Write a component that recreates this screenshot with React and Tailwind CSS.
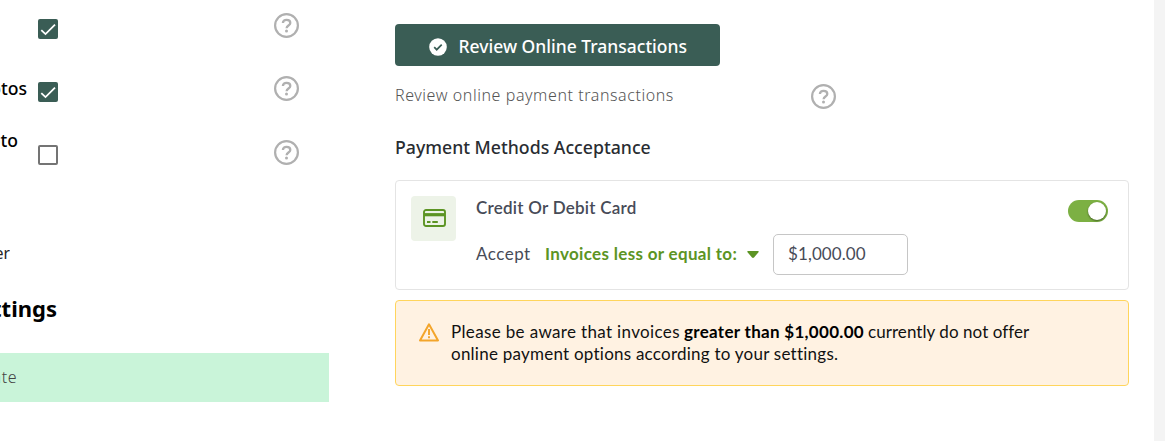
import React from "react";

function HelpIcon() {
  return (
    <svg className="block h-[25px] w-[25px] shrink-0" viewBox="0 0 25 25" fill="none" stroke="#b0b0b0">
      <circle cx="12.5" cy="12.5" r="11.4" strokeWidth="2.2" />
      <path d="M8.9 10C8.9 7.9 10.4 6.9 12.5 6.9s3.8 1.1 3.8 3c0 2.6-3.7 2.6-3.7 5.3" strokeWidth="2.3" />
      <circle cx="12.5" cy="18" r="1.5" fill="#b0b0b0" stroke="none" />
    </svg>
  );
}

function Checkbox({ checked }) {
  return checked ? (
    <div className="h-5 w-5 shrink-0 rounded-[2px] bg-[#3a5d55]">
      <svg className="block h-5 w-5" viewBox="0 0 20 20" fill="none" stroke="white" strokeWidth="1.8">
        <path d="M3.3 11.1 7.5 15.1 17 5.6" />
      </svg>
    </div>
  ) : (
    <div className="h-5 w-5 shrink-0 rounded-[2px] border-2 border-[#747474] bg-white" />
  );
}

function ClippedLabel({ children, className }) {
  return <div className={`flex justify-end overflow-hidden whitespace-nowrap ${className}`}>{children}</div>;
}

function SettingsColumn() {
  return (
    <section className="flex w-[329px] shrink-0 flex-col text-black">
      <div className="flex h-[64px] items-start pr-[30px]">
        <div className="w-[38px] shrink-0" />
        <div className="pt-[19px]"><Checkbox checked /></div>
        <div className="ml-auto pt-[13px]"><HelpIcon /></div>
      </div>
      <div className="flex h-[63px] items-start pr-[30px]">
        <ClippedLabel className="mr-[11px] mt-3 w-[27px] text-[17.6px] leading-6 font-medium">otos</ClippedLabel>
        <div className="pt-[18px]"><Checkbox checked /></div>
        <div className="ml-auto pt-[12px]"><HelpIcon /></div>
      </div>
      <div className="flex h-[64px] items-start pr-[30px]">
        <ClippedLabel className="mr-5 mt-px w-[18px] text-[17.6px] leading-6 font-medium">oto</ClippedLabel>
        <div className="pt-[18px]"><Checkbox /></div>
        <div className="ml-auto pt-[13px]"><HelpIcon /></div>
      </div>
      <ClippedLabel className="mt-[50px] w-[10px] text-[15.5px] leading-6 text-[#222]">er</ClippedLabel>
      <ClippedLabel className="mt-[27px] w-[57px] text-[22px] leading-8 font-bold">ettings</ClippedLabel>
      <div className="mt-[29px] flex h-[49px] items-center bg-[#c9f4d9] pb-[2px]">
        <ClippedLabel className="w-[17px] text-[16px] leading-6 font-light tracking-[0.54px] text-[#444]">ate</ClippedLabel>
      </div>
    </section>
  );
}

function CardPaymentMethod() {
  return (
    <div className="flex h-[110px] rounded border border-[#e4e4e4] bg-white pl-[15px] pr-5 pt-[15px] font-['Lato',sans-serif] text-[#474b57]">
      <div className="flex h-[45px] w-[45px] shrink-0 items-center justify-center rounded-[4px] bg-[#edf3e8]">
        <svg className="mb-px ml-px block h-[18px] w-[23px]" viewBox="0 0 23 18" fill="none" stroke="#5c9424">
          <rect x="1" y="1" width="21" height="16" rx="2" strokeWidth="1.9" />
          <path d="M1 5.7h21" strokeWidth="3.2" />
          <path d="M4 13h3.5M9.3 13h5.5" strokeWidth="1.8" />
        </svg>
      </div>
      <div className="ml-5 flex flex-col whitespace-nowrap text-[17px]">
        <div className="leading-6 font-semibold tracking-[0.25px]">Credit Or Debit Card</div>
        <div className="mt-[14px] flex h-[41px] items-center">
          <span className="w-[69px] pb-[2px] leading-6 tracking-[0.5px]">Accept</span>
          <span className="w-[202px] pb-[2px] leading-6 font-bold tracking-[0.32px] text-[#5c9424]">Invoices less or equal to:</span>
          <svg className="block h-[7px] w-[12px]" viewBox="0 0 12 7" fill="#5c9424">
            <path d="M1 0h10c.8 0 1 .7.5 1.2L7 6.5c-.6.6-1.4.6-2 0L.5 1.2C0 .7.2 0 1 0Z" />
          </svg>
          <div className="ml-[14px] flex h-[41px] w-[135px] items-center rounded-[5px] border border-[#c6c6c6] bg-white pb-px pl-[14px] tracking-[0.1px]">
            $1,000.00
          </div>
        </div>
      </div>
      <div className="ml-auto mt-1 flex h-[22px] w-10 items-center justify-end rounded-full bg-[#7cb043] pr-[2px]">
        <div className="h-[18px] w-[18px] rounded-full bg-white shadow-[0_1px_2px_rgba(0,0,0,0.45)]" />
      </div>
    </div>
  );
}

function PaymentNotice() {
  return (
    <div className="mt-[10px] flex h-[86px] rounded border border-[#ffd55c] bg-[#fff2e2] pl-[23px] pt-5 font-['Lato',sans-serif] text-[17px] leading-[22px] text-[#111]">
      <svg className="mt-[2px] block h-[19px] w-[20px] shrink-0" viewBox="0 0 20 19" fill="none" stroke="#f3a52b" strokeWidth="2" strokeLinejoin="round">
        <path d="M10 1.3 19 17.5H1Z" />
        <path d="M10 6v6M10 13.3v2" strokeWidth="1.9" />
      </svg>
      <div className="ml-3 whitespace-nowrap">
        <div className="flex gap-1">
          <span className="w-[229px] tracking-[0.35px]">Please be aware that invoices</span>
          <span className="w-[180px] font-bold tracking-[0.3px] text-black">greater than $1,000.00</span>
          <span className="tracking-[0.06px]">currently do not offer</span>
        </div>
        <div className="tracking-[0.24px]">online payment options according to your settings.</div>
      </div>
    </div>
  );
}

function PaymentsColumn() {
  return (
    <section className="ml-[66px] flex w-[734px] shrink-0 flex-col pt-6">
      <button className="flex h-[42px] w-[325px] items-center rounded bg-[#3a5d55] pl-[34px] text-white">
        <svg className="mt-[3px] block h-[18px] w-[18px]" viewBox="0 0 18 18">
          <circle cx="9" cy="9" r="8.8" fill="white" />
          <path d="m5.2 9.2 2.5 2.5 5-5" fill="none" stroke="#3a5d55" strokeWidth="1.7" />
        </svg>
        <span className="ml-[11.5px] whitespace-nowrap pt-[2px] text-[17.5px] leading-6 font-medium">Review Online Transactions</span>
      </button>
      <div className="mt-[18px] flex h-[25px] items-start">
        <span className="-mt-px whitespace-nowrap text-[16px] leading-6 font-light tracking-[0.57px] text-[#555]">Review online payment transactions</span>
        <div className="ml-auto mr-[293px]"><HelpIcon /></div>
      </div>
      <h3 className="mt-[26px] h-[45px] whitespace-nowrap text-[17.7px] leading-6 font-medium text-[#292d32]">Payment Methods Acceptance</h3>
      <CardPaymentMethod />
      <PaymentNotice />
    </section>
  );
}

export default function App() {
  return (
    <main className="flex h-[441px] w-[1165px] overflow-hidden bg-white font-['Noto_Sans',sans-serif]">
      <SettingsColumn />
      <PaymentsColumn />
      <div className="ml-auto w-[11px] bg-[#f4f4f4]" />
    </main>
  );
}
